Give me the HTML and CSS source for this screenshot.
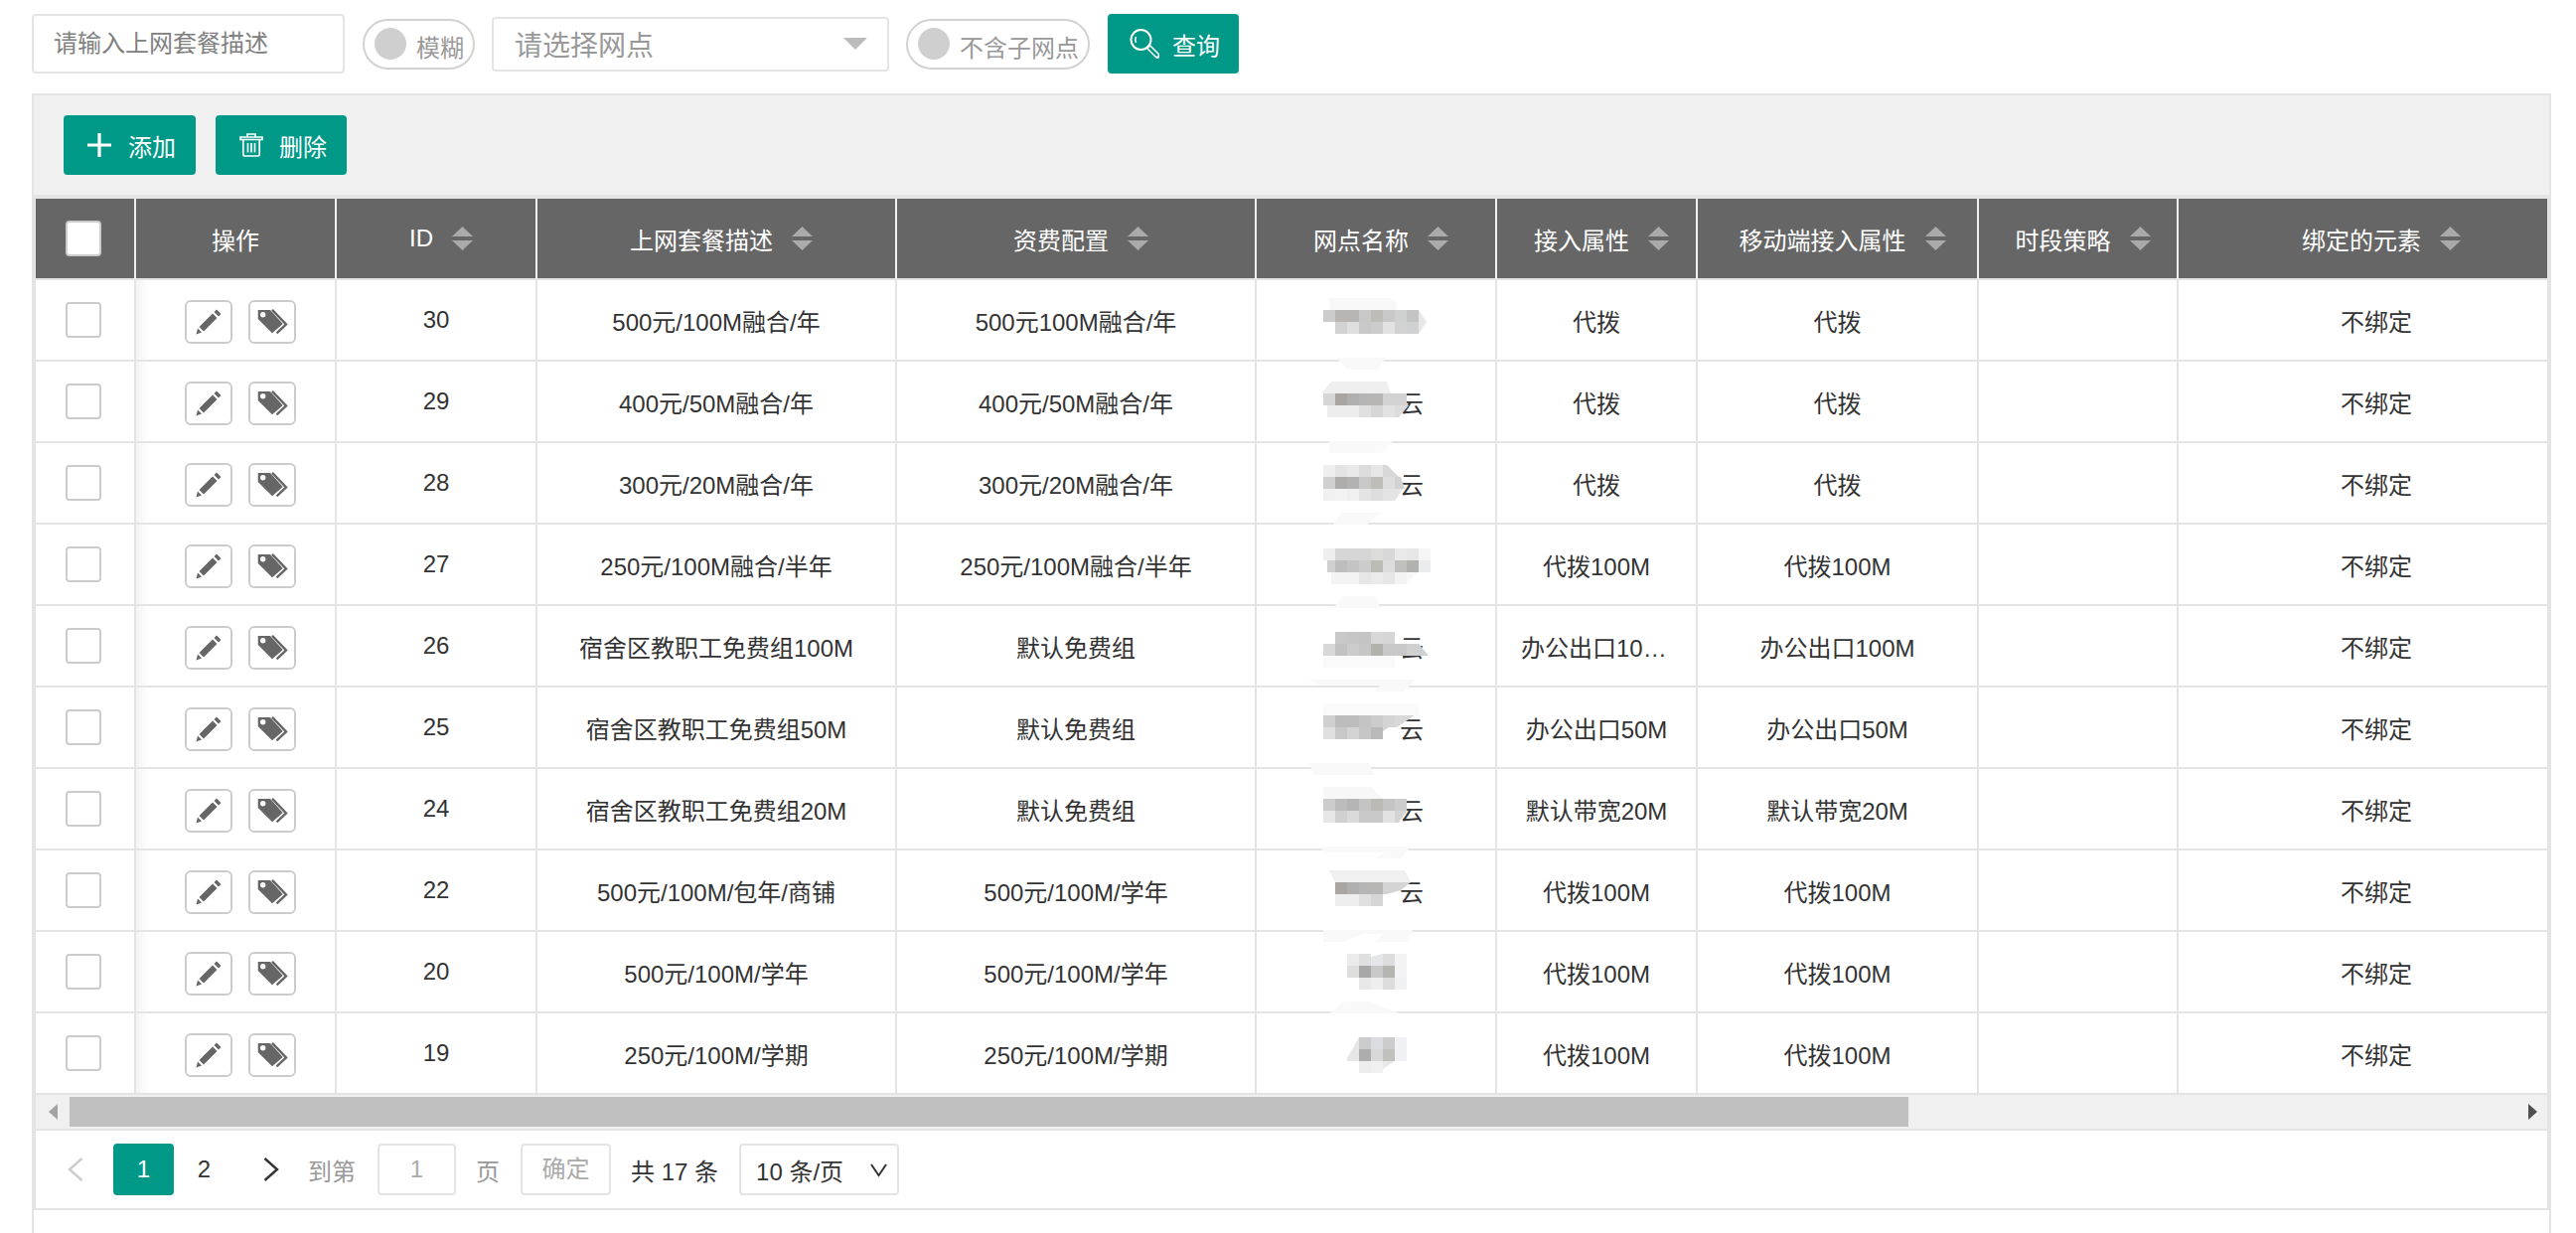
FILE: index.html
```html
<!DOCTYPE html>
<html lang="zh-CN">
<head>
  <meta charset="UTF-8">
  <title>上网套餐</title>
  <link rel="stylesheet" href="styles.css">
</head>
<body>
  <svg class="icon-defs" aria-hidden="true">
    <symbol id="i-sort" viewBox="0 0 21 24"><path d="M10.5 0 21 10H0zM0 14h21L10.5 24z"/></symbol>
    <symbol id="i-pencil" viewBox="0 0 26 26"><path d="M0.5 25.5 2 19.5l4 4zM3.5 18 17 4.5 21.5 9 8 22.5zM18.5 3 21 0.5 25.5 5 23 7.5z"/></symbol>
    <symbol id="i-tag" viewBox="0 0 31 25"><path fill-rule="evenodd" d="M0.7 1H13l12.7 14-10.7 9.3L0.7 10zM5.7 3a2.7 2.7 0 1 0 0 5.4 2.7 2.7 0 0 0 0-5.4z"/><path class="tag-edge" d="M15 0.8 29 15.5 19.5 24.4"/></symbol>
  </svg>

  <form class="search-bar">
    <input class="search-input" type="text" placeholder="请输入上网套餐描述">
    <div class="toggle toggle-short"><span class="knob"></span><span>模糊</span></div>
    <div class="select-box">
      <span>请选择网点</span>
      <span class="select-arrow"></span>
    </div>
    <div class="toggle toggle-long"><span class="knob"></span><span>不含子网点</span></div>
    <button class="btn btn-search" type="button">
      <svg width="30" height="30" viewBox="0 0 30 30" fill="none" stroke="currentColor">
        <circle cx="11.5" cy="11" r="10" stroke-width="2"/>
        <path d="M6.5 14c-1-2-1-4 0-6" stroke-width="1.6"/>
        <path d="M20 19l8 8" stroke-width="5.5" stroke-linecap="round"/>
        <path d="M20.5 19.5l7 7" stroke="#009988" stroke-width="2.5" stroke-linecap="round"/>
      </svg>
      查询
    </button>
  </form>

  <section class="panel">
    <div class="toolbar">
      <button class="btn btn-add" type="button">
        <svg width="24" height="24" viewBox="0 0 24 24" fill="#fff"><path d="M10.4 0h3.2v10.4H24v3.2H13.6V24h-3.2V13.6H0v-3.2h10.4z"/></svg>
        添加
      </button>
      <button class="btn btn-delete" type="button">
        <svg width="24" height="24" viewBox="0 0 24 24" fill="none" stroke="#fff" stroke-width="1.7">
          <path d="M8 3.5V1h8v2.5M1 4h22v2.5H1zM3.8 7v14.5A1.5 1.5 0 0 0 5.3 23h13.4a1.5 1.5 0 0 0 1.5-1.5V7M8.5 10v9.5M12 10v9.5M15.5 10v9.5"/>
        </svg>
        删除
      </button>
    </div>

    <div class="table-wrap">
      <div class="table-scroll">
        <table class="data-table">
          <colgroup>
            <col class="col-check"><col class="col-ops"><col class="col-id"><col class="col-desc"><col class="col-fee">
            <col class="col-site"><col class="col-access"><col class="col-mobile"><col class="col-time"><col class="col-bind">
          </colgroup>
          <thead>
            <tr>
              <th><span class="checkbox"></span></th>
              <th>操作</th>
              <th><span class="sorter">ID<svg class="sort-icon"><use href="#i-sort"/></svg></span></th>
              <th><span class="sorter">上网套餐描述<svg class="sort-icon"><use href="#i-sort"/></svg></span></th>
              <th><span class="sorter">资费配置<svg class="sort-icon"><use href="#i-sort"/></svg></span></th>
              <th><span class="sorter">网点名称<svg class="sort-icon"><use href="#i-sort"/></svg></span></th>
              <th><span class="sorter">接入属性<svg class="sort-icon"><use href="#i-sort"/></svg></span></th>
              <th><span class="sorter">移动端接入属性<svg class="sort-icon"><use href="#i-sort"/></svg></span></th>
              <th><span class="sorter">时段策略<svg class="sort-icon"><use href="#i-sort"/></svg></span></th>
              <th><span class="sorter">绑定的元素<svg class="sort-icon"><use href="#i-sort"/></svg></span></th>
            </tr>
          </thead>
          <tbody>
            <tr>
              <td><span class="checkbox"></span></td>
              <td class="ops"><div class="ops-inner"><button class="op-btn" type="button"><svg class="i-pencil"><use href="#i-pencil"/></svg></button><button class="op-btn" type="button"><svg class="i-tag"><use href="#i-tag"/></svg></button></div></td>
              <td>30</td><td>500元/100M融合/年</td><td>500元100M融合/年</td><td></td><td>代拨</td><td>代拨</td><td></td><td>不绑定</td>
            </tr>
            <tr>
              <td><span class="checkbox"></span></td>
              <td class="ops"><div class="ops-inner"><button class="op-btn" type="button"><svg class="i-pencil"><use href="#i-pencil"/></svg></button><button class="op-btn" type="button"><svg class="i-tag"><use href="#i-tag"/></svg></button></div></td>
              <td>29</td><td>400元/50M融合/年</td><td>400元/50M融合/年</td><td><span class="masked"></span>云</td><td>代拨</td><td>代拨</td><td></td><td>不绑定</td>
            </tr>
            <tr>
              <td><span class="checkbox"></span></td>
              <td class="ops"><div class="ops-inner"><button class="op-btn" type="button"><svg class="i-pencil"><use href="#i-pencil"/></svg></button><button class="op-btn" type="button"><svg class="i-tag"><use href="#i-tag"/></svg></button></div></td>
              <td>28</td><td>300元/20M融合/年</td><td>300元/20M融合/年</td><td><span class="masked"></span>云</td><td>代拨</td><td>代拨</td><td></td><td>不绑定</td>
            </tr>
            <tr>
              <td><span class="checkbox"></span></td>
              <td class="ops"><div class="ops-inner"><button class="op-btn" type="button"><svg class="i-pencil"><use href="#i-pencil"/></svg></button><button class="op-btn" type="button"><svg class="i-tag"><use href="#i-tag"/></svg></button></div></td>
              <td>27</td><td>250元/100M融合/半年</td><td>250元/100M融合/半年</td><td></td><td>代拨100M</td><td>代拨100M</td><td></td><td>不绑定</td>
            </tr>
            <tr>
              <td><span class="checkbox"></span></td>
              <td class="ops"><div class="ops-inner"><button class="op-btn" type="button"><svg class="i-pencil"><use href="#i-pencil"/></svg></button><button class="op-btn" type="button"><svg class="i-tag"><use href="#i-tag"/></svg></button></div></td>
              <td>26</td><td>宿舍区教职工免费组100M</td><td>默认免费组</td><td><span class="masked"></span>云</td><td>办公出口100M</td><td>办公出口100M</td><td></td><td>不绑定</td>
            </tr>
            <tr>
              <td><span class="checkbox"></span></td>
              <td class="ops"><div class="ops-inner"><button class="op-btn" type="button"><svg class="i-pencil"><use href="#i-pencil"/></svg></button><button class="op-btn" type="button"><svg class="i-tag"><use href="#i-tag"/></svg></button></div></td>
              <td>25</td><td>宿舍区教职工免费组50M</td><td>默认免费组</td><td><span class="masked"></span>云</td><td>办公出口50M</td><td>办公出口50M</td><td></td><td>不绑定</td>
            </tr>
            <tr>
              <td><span class="checkbox"></span></td>
              <td class="ops"><div class="ops-inner"><button class="op-btn" type="button"><svg class="i-pencil"><use href="#i-pencil"/></svg></button><button class="op-btn" type="button"><svg class="i-tag"><use href="#i-tag"/></svg></button></div></td>
              <td>24</td><td>宿舍区教职工免费组20M</td><td>默认免费组</td><td><span class="masked"></span>云</td><td>默认带宽20M</td><td>默认带宽20M</td><td></td><td>不绑定</td>
            </tr>
            <tr>
              <td><span class="checkbox"></span></td>
              <td class="ops"><div class="ops-inner"><button class="op-btn" type="button"><svg class="i-pencil"><use href="#i-pencil"/></svg></button><button class="op-btn" type="button"><svg class="i-tag"><use href="#i-tag"/></svg></button></div></td>
              <td>22</td><td>500元/100M/包年/商铺</td><td>500元/100M/学年</td><td><span class="masked"></span>云</td><td>代拨100M</td><td>代拨100M</td><td></td><td>不绑定</td>
            </tr>
            <tr>
              <td><span class="checkbox"></span></td>
              <td class="ops"><div class="ops-inner"><button class="op-btn" type="button"><svg class="i-pencil"><use href="#i-pencil"/></svg></button><button class="op-btn" type="button"><svg class="i-tag"><use href="#i-tag"/></svg></button></div></td>
              <td>20</td><td>500元/100M/学年</td><td>500元/100M/学年</td><td></td><td>代拨100M</td><td>代拨100M</td><td></td><td>不绑定</td>
            </tr>
            <tr>
              <td><span class="checkbox"></span></td>
              <td class="ops"><div class="ops-inner"><button class="op-btn" type="button"><svg class="i-pencil"><use href="#i-pencil"/></svg></button><button class="op-btn" type="button"><svg class="i-tag"><use href="#i-tag"/></svg></button></div></td>
              <td>19</td><td>250元/100M/学期</td><td>250元/100M/学期</td><td></td><td>代拨100M</td><td>代拨100M</td><td></td><td>不绑定</td>
            </tr>
          </tbody>
        </table>

        <!-- mosaic painted over the site names, coordinates are page pixels -->
        <svg class="mosaic" viewBox="1310 282 140 820" aria-hidden="true">
          <g fill="#f9f9f9">
            <path d="M1345 360h50l-8 12h-30l-6-6zM1338 444h64l-12 12h-52zM1350 516h40l-14 12h-34zM1352 600h32l6 12h-48zM1317 684h108l-12 12h-30l6-6h-60zM1318 768h60l6 12h-62zM1328 852h92l-10 12h-26l10-6h-60zM1332 936h90l-6 12h-32l8-8h-20l-20 8h-20zM1338 1020l16-12h26l28 12z"/>
          </g>
          <path fill="#f8f8f8" d="M1338 300h60l8 4v8h-68z"/>
          <path fill="#e8e8e8" d="M1428 312l8 12-8 12z"/>
          <rect x="1332" y="312" fill="#cccccc"/><rect x="1344" y="312" fill="#b8b6b5"/><rect x="1356" y="312" fill="#b8b6b5"/><rect x="1368" y="312" fill="#c8c8c8"/><rect x="1380" y="312" fill="#bdbcb8"/><rect x="1392" y="312" fill="#c8c8c8"/><rect x="1404" y="312" fill="#cfd0d0"/><rect x="1416" y="312" fill="#c4c4c4"/>
          <rect x="1344" y="324" fill="#d2d2d2"/><rect x="1356" y="324" fill="#dfdfdf"/><rect x="1368" y="324" fill="#c9c9c9"/><rect x="1380" y="324" fill="#cccccc"/><rect x="1392" y="324" fill="#e2e2e2"/><rect x="1404" y="324" fill="#d2d2d2"/><rect x="1416" y="324" fill="#d0d1d3"/>

          <path fill="#efefef" d="M1340 384h56l4 12h-70z"/>
          <rect x="1332" y="396" fill="#d6d6d6"/><rect x="1344" y="396" fill="#a9a5a3"/><rect x="1356" y="396" fill="#afafaf"/><rect x="1368" y="396" fill="#b6b5b5"/><rect x="1380" y="396" fill="#b7b6b5"/><rect x="1392" y="396" fill="#d2d2d2"/><rect x="1404" y="396" fill="#d2d2d2"/>
          <path fill="#ededed" d="M1336 408h32v12h-32z"/><rect x="1368" y="408" fill="#e0e0e0"/><rect x="1380" y="408" fill="#d6d6d6"/><rect x="1392" y="408" fill="#e2e2e2"/><path fill="#dcdcdc" d="M1404 408h14l-10 12h-4z"/>

          <rect x="1332" y="468" fill="#eeeeee"/><rect x="1344" y="468" fill="#e4e4e4"/><rect x="1356" y="468" fill="#e9e9e9"/><rect x="1368" y="468" fill="#dcdcdc"/><rect x="1380" y="468" fill="#e6e6e6"/><path fill="#d8d8d8" d="M1392 468h4l12 12h-16z"/>
          <rect x="1332" y="480" fill="#d0d0d0"/><rect x="1344" y="480" fill="#afadac"/><rect x="1356" y="480" fill="#b2b2b2"/><rect x="1368" y="480" fill="#c8c8c8"/><rect x="1380" y="480" fill="#bebdb9"/><rect x="1392" y="480" fill="#dedede"/><path fill="#d2d2d2" d="M1404 480h6l4 12h-10z"/>
          <rect x="1332" y="492" fill="#f0f0f0"/><rect x="1344" y="492" fill="#f3f3f3"/><rect x="1356" y="492" fill="#f0f0f0"/><rect x="1368" y="492" fill="#e4e4e4"/><rect x="1380" y="492" fill="#dedede"/><path fill="#e4e4e4" d="M1392 492h20l-8 12h-12z"/>

          <rect x="1332" y="552" fill="#eeeeee"/><rect x="1344" y="552" fill="#d6d6d6"/><rect x="1356" y="552" fill="#d6d6d6"/><rect x="1368" y="552" fill="#d6d6d6"/><rect x="1380" y="552" fill="#dcdcda"/><rect x="1392" y="552" fill="#d8d8d8"/><rect x="1404" y="552" fill="#eaeaea"/><rect x="1416" y="552" fill="#e6e6e6"/><rect x="1428" y="552" fill="#f5f5f5"/>
          <rect x="1336" y="564" fill="#d0d0d0"/><rect x="1344" y="564" fill="#bdbdbd"/><rect x="1356" y="564" fill="#c4c4c4"/><rect x="1368" y="564" fill="#cccccc"/><rect x="1380" y="564" fill="#bcbcb6"/><rect x="1392" y="564" fill="#dcdcdc"/><rect x="1404" y="564" fill="#c0c0be"/><rect x="1416" y="564" fill="#b1b1b0"/><rect x="1428" y="564" fill="#ebecee"/>
          <rect x="1340" y="576" fill="#f5f5f5"/><rect x="1344" y="576" fill="#f3f3f3"/><rect x="1356" y="576" fill="#f3f3f3"/><rect x="1368" y="576" fill="#e6e6e6"/><rect x="1380" y="576" fill="#ebebeb"/><rect x="1392" y="576" fill="#e6e6e6"/><rect x="1404" y="576" fill="#f3f3f3"/><path fill="#f8f8f8" d="M1416 576h12l-12 10z"/>

          <rect x="1344" y="636" fill="#c8c8c8"/><rect x="1356" y="636" fill="#c6c6c6"/><rect x="1368" y="636" fill="#c4c4c4"/><rect x="1380" y="636" fill="#d8d8d8"/><rect x="1392" y="636" fill="#d6d6d6"/>
          <rect x="1332" y="648" fill="#d8d8d8"/><rect x="1344" y="648" fill="#c2c2c2"/><rect x="1356" y="648" fill="#cccccc"/><rect x="1368" y="648" fill="#c6c6c6"/><rect x="1380" y="648" fill="#b2b2ac"/><rect x="1392" y="648" fill="#c8c8c8"/><rect x="1404" y="648" fill="#c8c8c8"/><path fill="#d0d0d0" d="M1416 648h12l10 12h-22z"/>
          <path fill="#fafafa" d="M1332 660h72v12h-72z"/>

          <path fill="#fafafa" d="M1332 708h96v12h-96z"/>
          <rect x="1332" y="720" fill="#d0d0d0"/><rect x="1344" y="720" fill="#bcbcbc"/><rect x="1356" y="720" fill="#bdbdbd"/><rect x="1368" y="720" fill="#c4c4c4"/><rect x="1380" y="720" fill="#cccccc"/><rect x="1392" y="720" fill="#d4d4d4"/><path fill="#d8d8d8" d="M1404 720h20l-18 12h-2z"/>
          <rect x="1332" y="732" fill="#e0e0e0"/><rect x="1344" y="732" fill="#c8c8c8"/><rect x="1356" y="732" fill="#d4d4d4"/><rect x="1368" y="732" fill="#c6c6c6"/><rect x="1380" y="732" fill="#b9b9b9"/><path fill="#d4d4d4" d="M1392 732h6l-6 4z"/>

          <path fill="#f7f7f7" d="M1332 792h48l12 12h-60z"/>
          <rect x="1332" y="804" fill="#cccccc"/><rect x="1344" y="804" fill="#bcbcbc"/><rect x="1356" y="804" fill="#b5b5b5"/><rect x="1368" y="804" fill="#c4c4c4"/><rect x="1380" y="804" fill="#bbbab6"/><rect x="1392" y="804" fill="#c4c4c4"/><rect x="1404" y="804" fill="#cccccc"/>
          <rect x="1332" y="816" fill="#e6e6e6"/><rect x="1344" y="816" fill="#d0d0d0"/><rect x="1356" y="816" fill="#dadada"/><rect x="1368" y="816" fill="#c8c8c8"/><rect x="1380" y="816" fill="#c8c8c8"/><rect x="1392" y="816" fill="#e2e2e2"/><path fill="#d4d4d4" d="M1404 816h12l-8 12h-4z"/>

          <path fill="#f0f0f0" d="M1338 876h76l6 12h-76z"/>
          <rect x="1344" y="888" fill="#a9a5a3"/><rect x="1356" y="888" fill="#afafaf"/><rect x="1368" y="888" fill="#b6b5b5"/><rect x="1380" y="888" fill="#b7b6b5"/><path fill="#d4d4d4" d="M1392 888h28l-10 8-14 4h-4z"/>
          <rect x="1344" y="900" fill="#eeeeee"/><rect x="1356" y="900" fill="#eeeeee"/><rect x="1368" y="900" fill="#e0e0e0"/><rect x="1380" y="900" fill="#d6d6d6"/>

          <rect x="1356" y="960" fill="#ebebeb"/><rect x="1368" y="960" fill="#dfdfdf"/><path fill="#e4e6ea" d="M1380 972v-9l12-3v12z"/><rect x="1392" y="960" fill="#dcdcdc"/><rect x="1404" y="960" fill="#f3f3f3"/>
          <rect x="1356" y="972" fill="#dededc"/><rect x="1368" y="972" fill="#a8a8a8"/><rect x="1380" y="972" fill="#c8c8c8"/><rect x="1392" y="972" fill="#b4b4b0"/><rect x="1404" y="972" fill="#f3f3f5"/>
          <rect x="1368" y="984" fill="#e8e8e8"/><rect x="1380" y="984" fill="#eeeeee"/><rect x="1392" y="984" fill="#dcdcdc"/><rect x="1404" y="984" fill="#f0f1f3"/>

          <rect x="1368" y="1044" fill="#cccccc"/><rect x="1380" y="1044" fill="#dadce0"/><rect x="1392" y="1044" fill="#cccccc"/><rect x="1404" y="1044" fill="#f0f1f5"/>
          <path fill="#e6e6e6" d="M1368 1044v24h-12v-3z"/><rect x="1368" y="1056" fill="#adadad"/><rect x="1380" y="1056" fill="#d8d8d8"/><rect x="1392" y="1056" fill="#c0c0bc"/><rect x="1404" y="1056" fill="#f0f1f5"/>
          <rect x="1368" y="1068" fill="#ededed"/><rect x="1380" y="1068" fill="#f0f0f0"/><path fill="#e8e8e8" d="M1392 1068h12l-12 8z"/>
        </svg>
      </div>

      <div class="scrollbar">
        <span class="scroll-btn"><span class="arrow-left"></span></span>
        <span class="scroll-thumb"></span>
        <span class="scroll-btn scroll-btn-right"><span class="arrow-right"></span></span>
      </div>

      <div class="pager">
        <svg class="pager-prev" width="16" height="24" viewBox="0 0 16 24" fill="none" stroke="#cccccc" stroke-width="2.4"><path d="M14.5 1 2 12l12.5 11"/></svg>
        <span class="page-num page-active">1</span>
        <span class="page-num">2</span>
        <svg class="pager-next" width="16" height="24" viewBox="0 0 16 24" fill="none" stroke="#333" stroke-width="2.4"><path d="M1.5 1 14 12 1.5 23"/></svg>
        <span class="pager-label pager-goto">到第</span>
        <span class="page-jump">1</span>
        <span class="pager-label pager-unit">页</span>
        <span class="page-ok">确定</span>
        <span class="page-total">共 17 条</span>
        <div class="page-size">
          <span>10 条/页</span>
          <svg width="17" height="15" viewBox="0 0 17 15" fill="none" stroke="#333" stroke-width="2"><path d="M1 2l7.5 11L16 2"/></svg>
        </div>
      </div>
    </div>
  </section>
</body>
</html>
```

FILE: styles.css
```css
* {
  box-sizing: border-box;
}

html, body {
  height: 100%;
}

body {
  margin: 0;
  display: flex;
  flex-direction: column;
  overflow: hidden;
  background-color: #fff;
  color: #333;
  font-family: "Liberation Sans", "Noto Sans CJK SC", sans-serif;
  font-size: 24px;
}

.icon-defs {
  display: none;
}

.btn {
  display: flex;
  align-items: center;
  height: 60px;
  padding: 0 0 0 24px;
  border: none;
  border-radius: 4px;
  background-color: #009988;
  color: #fff;
  font-family: inherit;
  font-size: 24px;
}

/* search row */
.search-bar {
  display: flex;
  align-items: center;
  height: 60px;
  margin: 14px 0 0 32px;
  flex: none;
}

.search-input {
  width: 315px;
  height: 60px;
  padding: 0 20px;
  border: 2px solid #e4e4e4;
  border-radius: 4px;
  font-family: inherit;
  font-size: 24px;
  outline: none;
}

.search-input::placeholder {
  color: #808080;
  opacity: 1;
}

.toggle {
  display: flex;
  align-items: center;
  height: 51px;
  margin-left: 18px;
  padding-left: 10px;
  border: 2px solid #d2d2d2;
  border-radius: 26px;
  color: #999;
}

.toggle span:last-child {
  margin: 4px 0 0 10px;
  white-space: nowrap;
}

.toggle-short {
  width: 113px;
}

.toggle-long {
  width: 185px;
  margin-left: 17px;
}

.knob {
  width: 32px;
  height: 32px;
  border-radius: 50%;
  background-color: #cfcfcf;
  flex: none;
}

.select-box {
  display: flex;
  align-items: center;
  justify-content: space-between;
  width: 400px;
  height: 55px;
  margin-left: 17px;
  padding: 0 20px 0 21px;
  border: 2px solid #e4e4e4;
  border-radius: 4px;
  color: #999;
  font-size: 28px;
}

.select-arrow {
  width: 0;
  height: 0;
  border-left: 12px solid transparent;
  border-right: 12px solid transparent;
  border-top: 12px solid #bbb;
}

.btn-search {
  width: 132px;
  margin-left: 18px;
  padding-left: 22px;
  gap: 13px;
}

/* panel */
.panel {
  flex: 1;
  margin: 20px 25px 0 32px;
  border: 2px solid #e4e4e4;
  border-bottom: none;
  background-color: #fff;
}

.toolbar {
  display: flex;
  gap: 20px;
  height: 100px;
  padding: 20px 0 0 30px;
  background-color: #f0f0f0;
}

.btn-add {
  width: 133px;
  gap: 17px;
}

.btn-delete {
  width: 132px;
  gap: 16px;
}

.table-wrap {
  border: 2px solid #e4e4e4;
  border-top-width: 4px;
}

.table-scroll {
  position: relative;
  overflow: hidden;
}

.data-table {
  width: 2557px;
  table-layout: fixed;
  border-collapse: separate;
  border-spacing: 0;
}

.col-check { width: 101px; }
.col-ops { width: 202px; }
.col-id { width: 202px; }
.col-desc { width: 362px; }
.col-fee { width: 362px; }
.col-site { width: 242px; }
.col-access { width: 202px; }
.col-mobile { width: 283px; }
.col-time { width: 201px; }
.col-bind { width: 400px; }

.data-table th {
  height: 82px;
  padding: 0;
  background-color: #666;
  background-clip: padding-box;
  border-right: 2px solid #f0f0f0;
  border-bottom: 2px solid #e4e4e4;
  color: #fff;
  font-weight: normal;
}

.data-table td {
  height: 82px;
  padding: 0 24px;
  border-right: 2px solid #e4e4e4;
  border-bottom: 2px solid #e4e4e4;
  text-align: center;
  white-space: nowrap;
  overflow: hidden;
  text-overflow: ellipsis;
}

.data-table td.ops {
  padding: 0 0 0 10px;
  background: linear-gradient(90deg, #f3f3f3, #fff 12px);
}

.ops-inner {
  display: flex;
  justify-content: center;
  gap: 16px;
  margin-top: 3px;
}

.op-btn {
  display: flex;
  align-items: center;
  justify-content: center;
  width: 48px;
  height: 44px;
  padding: 0;
  border: 2px solid #ccc;
  border-radius: 6px;
  background-color: #fff;
  fill: #666;
}

.i-pencil {
  width: 26px;
  height: 26px;
}

.i-tag {
  width: 31px;
  height: 25px;
}

.tag-edge {
  fill: none;
  stroke: #666;
  stroke-width: 2.4;
}

.checkbox {
  display: block;
  width: 36px;
  height: 36px;
  margin: 0 auto 0 30px;
  border: 2px solid #ccc;
  border-radius: 4px;
  background-color: #fff;
}

.data-table td:first-child {
  padding: 0;
}

.sorter {
  display: inline-flex;
  align-items: center;
  gap: 19px;
  padding-left: 10px;
}

.sort-icon {
  width: 21px;
  height: 24px;
  fill: #aaa;
}

.masked {
  display: inline-block;
  width: 72px;
}

.mosaic {
  position: absolute;
  top: 82px;
  left: 1274px;
  width: 140px;
  height: 820px;
  pointer-events: none;
}

.mosaic rect {
  width: 12px;
  height: 12px;
}

/* fake horizontal scrollbar */
.scrollbar {
  display: flex;
  align-items: center;
  height: 36px;
  border-bottom: 2px solid #e4e4e4;
  background-color: #f0f0f0;
}

.scroll-btn {
  display: flex;
  align-items: center;
  justify-content: center;
  width: 34px;
}

.scroll-btn-right {
  width: 30px;
  margin-left: auto;
}

.arrow-left {
  border-top: 8px solid transparent;
  border-bottom: 8px solid transparent;
  border-right: 9px solid #a3a3a3;
}

.arrow-right {
  border-top: 8px solid transparent;
  border-bottom: 8px solid transparent;
  border-left: 9px solid #505050;
}

.scroll-thumb {
  width: 1851px;
  height: 30px;
  background-color: #c0c0c0;
}

/* pager */
.pager {
  display: flex;
  align-items: center;
  height: 78px;
  padding-left: 32px;
}

.pager svg {
  flex: none;
}

.page-num {
  width: 61px;
  height: 52px;
  line-height: 52px;
  text-align: center;
  border-radius: 4px;
}

.pager-prev + .page-num {
  margin-left: 30px;
}

.page-active {
  background-color: #009988;
  color: #fff;
}

.pager-next {
  margin-left: 29px;
}

.pager-label {
  color: #999;
}

.pager-goto {
  margin-left: 29px;
}

.page-jump,
.page-ok {
  height: 52px;
  line-height: 48px;
  text-align: center;
  border: 2px solid #e4e4e4;
  border-radius: 4px;
  color: #aaa;
}

.page-jump {
  width: 79px;
  margin-left: 22px;
}

.pager-unit {
  margin-left: 20px;
}

.page-ok {
  width: 91px;
  margin-left: 21px;
}

.page-total {
  margin-left: 20px;
  white-space: nowrap;
}

.page-size {
  display: flex;
  align-items: center;
  justify-content: space-between;
  width: 161px;
  height: 52px;
  margin-left: 21px;
  padding: 0 10px 0 15px;
  border: 2px solid #e4e4e4;
  border-radius: 4px;
  white-space: nowrap;
}
```
